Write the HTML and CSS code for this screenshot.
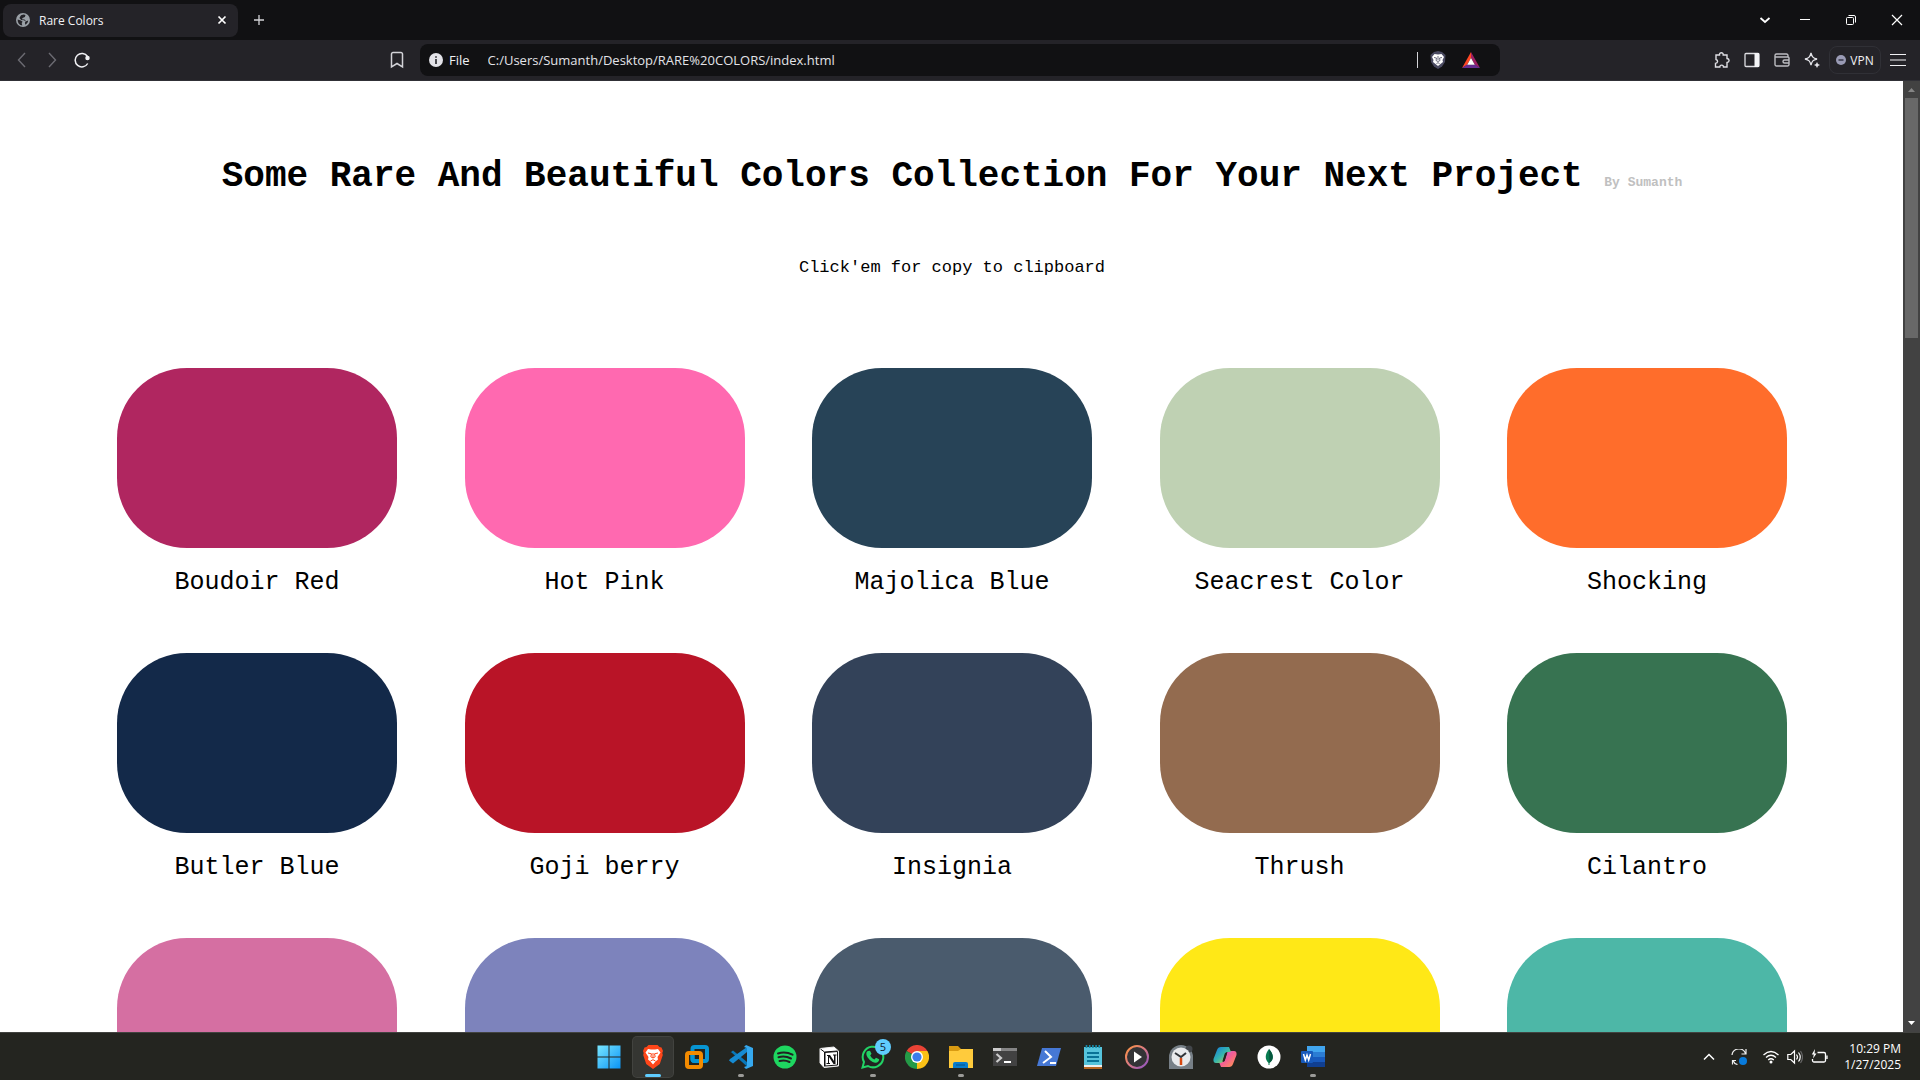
FILE: index.html
```
<!DOCTYPE html>
<html lang="en">
<head>
<meta charset="utf-8">
<title>Rare Colors</title>
<link rel="stylesheet" href="styles.css">
</head>
<body>
<header class="browser">
  <div class="tabs">
    <div class="tab">
      <svg width="14" height="14" viewBox="0 0 14 14"><circle cx="7" cy="7" r="7" fill="#9aa0a6"/><path d="M1.6 6.5 5 7.6l1.6 1.2-.9 1.2.6 2.6C3.300 12.200 1.500 10 1.600 6.500ZM5 2.200l2.600-.7L9.500 2l-.6 2-2.300 1-.7 1.300 2.600.2 1.600 1.700 2.100-.6c-.3 2-1.400 3.400-2.900 4.200l-.4-2.400 1-1-2-1.200-2.700-.2L3.400 5Z" fill="#242328"/></svg>
      <span class="tab-title">Rare Colors</span>
      <button class="icon-button tab-close" aria-label="Close tab"><svg width="10" height="10" viewBox="0 0 10 10" stroke="#fff" stroke-width="1.700"><path d="m1.500 1.500 7 7m0-7-7 7"/></svg></button>
    </div>
    <button class="icon-button new-tab" aria-label="New tab"><svg width="12" height="12" viewBox="0 0 12 12" stroke="#d4d4d8" stroke-width="1.300"><path d="M6 1v10M1 6h10"/></svg></button>
    <div class="window-controls">
      <button class="icon-button" aria-label="Search tabs"><svg width="12" height="12" viewBox="0 0 12 12" fill="none" stroke="#fff" stroke-width="1.800"><path d="m1.500 4 4.500 4 4.500-4"/></svg></button>
      <button class="icon-button" aria-label="Minimize"><svg width="12" height="12" viewBox="0 0 12 12" stroke="#fff"><path d="M1 5.500h10"/></svg></button>
      <button class="icon-button" aria-label="Restore"><svg width="12" height="12" viewBox="0 0 12 12" fill="none" stroke="#fff"><rect x="1.500" y="3.500" width="7" height="7" rx="1"/><path d="M3.500 1.500H9A1.500 1.500 0 0 1 10.500 3v5.500"/></svg></button>
      <button class="icon-button" aria-label="Close"><svg width="12" height="12" viewBox="0 0 12 12" stroke="#fff" stroke-width="1.200"><path d="m1 1 10 10m0-10L1 11"/></svg></button>
    </div>
  </div>
  <div class="toolbar">
    <div class="navigation">
      <button class="icon-button" aria-label="Back"><svg width="16" height="16" viewBox="0 0 16 16" fill="none" stroke="#6c6b72" stroke-width="1.400"><path d="M11 1 4.500 8l6.500 7"/></svg></button>
      <button class="icon-button" aria-label="Forward"><svg width="16" height="16" viewBox="0 0 16 16" fill="none" stroke="#6c6b72" stroke-width="1.400"><path d="m5 1 6.500 7L5 15"/></svg></button>
      <button class="icon-button" aria-label="Reload"><svg width="16" height="16" viewBox="0 0 16 16" fill="none" stroke="#f1f1f4" stroke-width="1.500"><path d="M13.500 4.500A6.700 6.700 0 1 0 13.700 11.500"/><circle cx="13.500" cy="6" r="1.500" fill="#f1f1f4"/></svg></button>
    </div>
    <button class="icon-button bookmark" aria-label="Bookmark"><svg width="14" height="18" viewBox="0 0 14 18" fill="none" stroke="#d2d2d7" stroke-width="1.500"><path d="M1.500 16V3a1.500 1.500 0 0 1 1.500-1.500h8A1.500 1.500 0 0 1 12.500 3v13L7 12.500Z"/></svg></button>
    <form class="address">
      <svg width="14" height="14" viewBox="0 0 14 14"><circle cx="7" cy="7" r="7" fill="#e3e3e8"/><path d="M6.200 3.200h1.600v1.500H6.200zM6.200 6h1.600v5H6.200z" fill="#242328"/></svg>
      <label for="url">File</label>
      <input id="url" type="text" value="C:/Users/Sumanth/Desktop/RARE%20COLORS/index.html">
      <span class="divider"></span>
      <button type="button" class="icon-button" aria-label="Shields"><svg width="16" height="18" viewBox="0 0 16 18"><path d="M4 1 8 0l4 1 3.500 3-.5 7-3 4.500L8 18l-4-2.500L1 11 .5 4Z" fill="#4a4a61"/><path d="m4.500 3 3.500.500 3.500-.500L14 6l-1.500 3 .5 2-2.500 2L8 15l-2.500-2L3 11l.5-2L2 6Z" fill="#fff"/><path d="m4 6.500 2.500.5L6 9.500l2 1 2-1L9.500 7l2.500-.5M8 5v4m-1.500 3.500L8 11.700l1.500.8" fill="none" stroke="#4a4a61" stroke-width=".8"/></svg></button>
      <button type="button" class="icon-button" aria-label="Rewards"><svg width="18" height="16" viewBox="0 0 18 16"><path d="M9 0 0 16l5-3L9 6Z" fill="#ff4724"/><path d="m9 0 9 16-5-3L9 6Z" fill="#9e1f63"/><path d="m0 16 5-3.500h8l5 3.500Z" fill="#662d91"/><path d="m9 6 3.800 6.700H5.200Z" fill="#fff"/></svg></button>
    </form>
    <div class="extensions">
      <button class="icon-button" aria-label="Extensions"><svg width="16" height="16" viewBox="0 0 16 16" fill="none" stroke="#dedee3" stroke-width="1.400"><path d="M2 3h3.500c-.3-3 4-3 3.700 0H13v3.500c2.800.3 2.800 3.500 0 4V15H9.500c0-2.500-3.700-2.500-3.700 0H1.500v-3.600c2.700-.2 2.700-3.400.5-3.900Z"/></svg></button>
      <button class="icon-button" aria-label="Sidebar"><svg width="16" height="16" viewBox="0 0 16 16"><rect x="1" y="1.500" width="14" height="13" rx="1" fill="none" stroke="#dedee3" stroke-width="1.300"/><path d="M10.500 1H15v14h-4.500z" fill="#f4f4f7"/></svg></button>
      <button class="icon-button" aria-label="Wallet"><svg width="16" height="16" viewBox="0 0 16 16" fill="none" stroke="#bcbcc1" stroke-width="1.400"><path d="M14 5V3.500A1.500 1.500 0 0 0 12.500 2h-10A1.500 1.500 0 0 0 1 3.500v9A1.500 1.500 0 0 0 2.500 14h11a1.500 1.500 0 0 0 1.500-1.500V6a1 1 0 0 0-1-1H1m14 3h-4.500a1.500 1.500 0 0 0 0 3H15"/></svg></button>
      <button class="icon-button" aria-label="Assistant"><svg width="16" height="16" viewBox="0 0 16 16" fill="none" stroke="#e3e3e8" stroke-width="1.300"><path d="M7 1c1 4 2 5 6 6-4 1-5 2-6 6-1-4-2-5-6-6 4-1 5-2 6-6Z"/><path d="m13 10 1 2 2 1-2 1-1 2-1-2-2-1 2-1Z" fill="#e3e3e8" stroke="none"/></svg></button>
    </div>
    <button class="vpn"><svg width="10" height="10" viewBox="0 0 10 10"><circle cx="5" cy="5" r="5" fill="#9a9bb5"/><path d="M2.500 4.200h5v1.600h-5z" fill="#3a3a4d"/></svg>VPN</button>
    <button class="icon-button menu" aria-label="Menu"><svg width="16" height="14" viewBox="0 0 16 14" stroke="#f1f1f4" stroke-width="1.200"><path d="M0 1.500h16M0 7h16M0 12.500h16"/></svg></button>
  </div>
</header>

<div class="viewport">
  <main class="page">
    <h1 class="title">Some Rare And Beautiful Colors Collection For Your Next Project <span class="author">By Sumanth</span></h1>
    <p class="hint">Click'em for copy to clipboard</p>
    <div class="palette">
      <button class="color"><span class="swatch boudoir-red"></span>Boudoir Red</button>
      <button class="color"><span class="swatch hot-pink"></span>Hot Pink</button>
      <button class="color"><span class="swatch majolica-blue"></span>Majolica Blue</button>
      <button class="color"><span class="swatch seacrest"></span>Seacrest Color</button>
      <button class="color"><span class="swatch shocking"></span>Shocking</button>
      <button class="color"><span class="swatch butler-blue"></span>Butler Blue</button>
      <button class="color"><span class="swatch goji-berry"></span>Goji berry</button>
      <button class="color"><span class="swatch insignia"></span>Insignia</button>
      <button class="color"><span class="swatch thrush"></span>Thrush</button>
      <button class="color"><span class="swatch cilantro"></span>Cilantro</button>
      <button class="color" aria-label="Pink"><span class="swatch orchid"></span></button>
      <button class="color" aria-label="Lavender"><span class="swatch lavender"></span></button>
      <button class="color" aria-label="Slate"><span class="swatch slate"></span></button>
      <button class="color" aria-label="Yellow"><span class="swatch yellow"></span></button>
      <button class="color" aria-label="Turquoise"><span class="swatch turquoise"></span></button>
    </div>
  </main>
  <div class="scrollbar">
    <svg width="17" height="17" viewBox="0 0 17 17"><path d="M5 11h7L8.500 7Z" fill="#858585"/></svg>
    <div class="thumb"></div>
    <svg class="scroll-down" width="17" height="17" viewBox="0 0 17 17"><path d="M5 6h7l-3.500 4Z" fill="#fff"/></svg>
  </div>
</div>

<footer class="taskbar">
  <nav class="apps">
    <button class="app" aria-label="Start"><svg width="24" height="24" viewBox="0 0 24 24"><defs><linearGradient id="win" x2="1" y2="1"><stop stop-color="#79e6ff"/><stop offset="1" stop-color="#0a94f5"/></linearGradient></defs><path d="M.5.500h11v11H.5zm12 0h11v11h-11zM.5 12.500h11v11H.5zm12 0h11v11h-11z" fill="url(#win)"/></svg></button>
    <button class="app active" aria-label="Brave"><svg width="24" height="24" viewBox="0 0 24 24"><path d="M7.500 0h9l2 2 2 .5L22 6l-.7 2 .5 2-3 9L12 24l-6.800-5-3-9 .5-2L2 6l1.500-3.500 2-.5Z" fill="#ff4619"/><path d="m7 4 3 .5h4l3-.5 2.500 3.500-3 4.500.5 2.500-2.500 2L12 19.500l-2.500-3-2.500-2 .5-2.500-3-4.500Z" fill="#fff"/><path d="m7 8 3.500.8-.7 3 2.200 1.200 2.200-1.200-.7-3L17 8M12 8v5m-2.500 3 2.500-1.300 2.500 1.300" fill="none" stroke="#ff4619"/></svg></button>
    <button class="app" aria-label="VMware"><svg width="24" height="24" viewBox="0 0 24 24" fill="none" stroke-width="4"><rect x="7.500" y="2" width="14.500" height="14" rx="2" stroke="#0795d3"/><rect x="2" y="8" width="14" height="14" rx="2" stroke="#f38b00"/><path d="M7.500 10v4a2 2 0 0 0 2 2h4" stroke="#0795d3"/></svg></button>
    <button class="app running" aria-label="Visual Studio Code"><svg width="24" height="24" viewBox="0 0 24 24"><path d="m2 7 16 14.500V17L4 5.500 0 8.500Z" fill="#0877b9"/><path d="m0 15.500 4 3L18 7V2L1 14Z" fill="#168bd2"/><path d="M17 0 24 3v18l-7 3-2-2 3-1V3l-3-1Z" fill="#36a9ef"/></svg></button>
    <button class="app" aria-label="Spotify"><svg width="24" height="24" viewBox="0 0 24 24"><circle cx="12" cy="12" r="11.500" fill="#1ed760"/><path d="M5 8.500c5-1.500 10-1 14.500 1.200M5.500 12.300c4-1.200 8.500-.8 12.500 1.200M6.500 16c3.500-1 7-.6 10 1" fill="none" stroke="#222" stroke-width="2" stroke-linecap="round"/></svg></button>
    <button class="app" aria-label="Notion"><svg width="24" height="24" viewBox="0 0 24 24"><path d="m3 3.500 14-1.500 4.500 4v15L7 22.500 3 18Z" fill="#fff" stroke="#eee"/><path d="m3.500 4 4 3 13-1M7.500 7v14.500" fill="none" stroke="#111"/><path d="M8 7.500 20.500 6.500v13.500L8 21Z" fill="#fff" stroke="#111"/><path d="M10 10h3l4 6v-5.500h-1v-1h3.500v1h-1V19h-2l-4.500-7v6h1v1H9.500v-1H11v-7h-1Z" fill="#111"/></svg></button>
    <button class="app running" aria-label="WhatsApp"><svg width="24" height="24" viewBox="0 0 24 24"><path d="M1.500 22.500 3 17a10.300 10.300 0 1 1 4 4Z" fill="#222" stroke="#22d365" stroke-width="2"/><path d="m7 6 2-.2 1.500 3-1.300 1.800c1 2 2.300 3.100 4.200 3.900l1.600-1.700 3.200 1.500c-.2 3-2.500 4-5 3.200-4-1.200-8.500-6-7.800-9.500.1-.9.700-1.600 1.600-2Z" fill="#22d365"/></svg><span class="badge">5</span></button>
    <button class="app" aria-label="Chrome"><svg width="24" height="24" viewBox="0 0 24 24"><path d="M12 12 1.600 6a12 12 0 0 1 20.800 0Z" fill="#ea4335"/><path d="M12 12 22.400 6A12 12 0 0 1 12 24Z" fill="#fbc116"/><path d="M12 12v12A12 12 0 0 1 1.600 6Z" fill="#249a47"/><path d="M12 6h10.400l-4.900 9L12 24l4-9Z" fill="#fbc116"/><circle cx="12" cy="12" r="6" fill="#fff"/><circle cx="12" cy="12" r="4.600" fill="#3b7ded"/></svg></button>
    <button class="app running" aria-label="File Explorer"><svg width="24" height="24" viewBox="0 0 24 24"><path d="M0 1h9l3 3h11v8H0Z" fill="#d99b12"/><path d="M0 6h9l3-2h12v19H0Z" fill="#ffcb3c"/><path d="M4 23v-4a2 2 0 0 1 2-2h11a2 2 0 0 1 2 2v4Z" fill="#087bcb"/><path d="M7 20h9" stroke="#075f9e" stroke-width="1.500"/></svg></button>
    <button class="app" aria-label="Terminal"><svg width="24" height="24" viewBox="0 0 24 24"><path d="M0 3h24v18H0Z" fill="#424242"/><path d="M0 3h8v3H0z" fill="#ccc"/><path d="M8 3h16v3H8z" fill="#858585"/><path d="m3.500 9 4.500 4-4.500 4" fill="none" stroke="#ccc" stroke-width="2.200"/><path d="M11 16h7v2h-7z" fill="#fff"/></svg></button>
    <button class="app" aria-label="PowerShell"><svg width="24" height="24" viewBox="0 0 24 24"><path d="M5 3h19l-5 18H0Z" fill="#4678d5"/><path d="m8 6 6 6-8 6m7 0h6" fill="none" stroke="#fff" stroke-width="2"/></svg></button>
    <button class="app" aria-label="Notepad"><svg width="24" height="24" viewBox="0 0 24 24"><path d="M3 2h18v19H3z" fill="#56c4dc"/><path d="M3 20h18v2H3z" fill="#eee"/><path d="M3 22h18v2H3z" fill="#b66520"/><path d="M6 8h12M6 12h12M6 16h12" stroke="#087397" stroke-width="1.800"/><path d="M5.500 0v3m3.200-3v3m3.200-3v3m3.200-3v3m3.200-3v3" stroke="#168caa" stroke-width="1.600"/></svg></button>
    <button class="app" aria-label="Media Player"><svg width="24" height="24" viewBox="0 0 24 24"><defs><linearGradient id="media" x2="1" y2="1"><stop stop-color="#ff943f"/><stop offset=".5" stop-color="#d87985"/><stop offset="1" stop-color="#8750c7"/></linearGradient></defs><circle cx="12" cy="12" r="11" fill="#333336" stroke="url(#media)" stroke-width="2"/><path d="M9 6.500v11l8-5.500Z" fill="#fff"/></svg></button>
    <button class="app" aria-label="Clock"><svg width="24" height="24" viewBox="0 0 24 24"><path d="M0 12A12 12 0 0 1 24 12v12H0Z" fill="#778087"/><circle cx="20" cy="4" r="3.500" fill="#42464a"/><circle cx="12" cy="12" r="9.500" fill="#e8eaec"/><path d="m6 8 6 4 5-4" fill="none" stroke="#303438" stroke-width="2"/><path d="M12 13v7" stroke="#d74810" stroke-width="2.500"/></svg></button>
    <button class="app" aria-label="Copilot"><svg width="24" height="24" viewBox="0 0 24 24"><defs><linearGradient id="cool" y2="1"><stop stop-color="#137ae0"/><stop offset=".5" stop-color="#36b7ad"/><stop offset="1" stop-color="#ebd42e"/></linearGradient><linearGradient id="warm" y2="1"><stop stop-color="#ac65ea"/><stop offset=".5" stop-color="#f45f91"/><stop offset="1" stop-color="#ff9d48"/></linearGradient></defs><path d="M16 22H8l-2-5h4q1.500 0 2-2l2.500-8q.5-1 2-1H21q3 0 2.500 4L20 19q-1 3-4 3Z" fill="url(#warm)"/><path d="M8 2h8l2 5h-4q-1.500 0-2 2l-2.500 8q-.5 1-2 1H3q-3 0-2.500-4L4 5q1-3 4-3Z" fill="url(#cool)"/><path d="M12 8h2l-2.500 8h-2Z" fill="#242520"/></svg></button>
    <button class="app" aria-label="MongoDB"><svg width="24" height="24" viewBox="0 0 24 24"><circle cx="12" cy="12" r="11.500" fill="#fff"/><path d="M12 4c5 6 5 10 .5 14v2h-1v-2C7.500 14 8 9 12 4Z" fill="#087b50"/><path d="M12 4c5 6 5 10 .5 14Z" fill="#06583e"/></svg></button>
    <button class="app running" aria-label="Word"><svg width="24" height="24" viewBox="0 0 24 24"><path d="M6 1h18v6H6z" fill="#41a5ee"/><path d="M6 7h18v5H6z" fill="#2b7cd3"/><path d="M6 12h18v5H6z" fill="#185abd"/><path d="M6 17h18v5H6z" fill="#103f91"/><rect y="6" width="12" height="12" rx="1" fill="#175abc"/><path d="m2.500 9 1.800 6L6 10l1.700 5 1.800-6" fill="none" stroke="#fff" stroke-width="1.500"/></svg></button>
  </nav>
  <div class="tray">
    <button class="icon-button" aria-label="Show hidden icons"><svg width="12" height="12" viewBox="0 0 12 12" fill="none" stroke="#fff" stroke-width="1.500"><path d="m1 8.500 5-5 5 5"/></svg></button>
    <button class="icon-button sync" aria-label="Updates"><svg width="16" height="16" viewBox="0 0 16 16" fill="none" stroke="#eee" stroke-width="1.200"><path d="M1 6A7 7 0 0 1 14.500 4.500M15 0v5h-4.500M6.500 15.500a6 6 0 0 1-4.500-4M1.500 15.500v-4H5"/><circle cx="12" cy="12" r="4" fill="#087bdc" stroke="none"/></svg></button>
    <button class="status" aria-label="Network, volume and battery">
      <svg width="16" height="16" viewBox="0 0 16 16" fill="none" stroke="#fff" stroke-width="1.300"><path d="M.5 6q7.500-7 15 0M3 8.500q5-4.500 10 0M5.200 11q2.800-2.500 5.600 0"/><circle cx="8" cy="13" r="1.500" fill="#fff" stroke="none"/></svg>
      <svg width="16" height="16" viewBox="0 0 16 16" fill="none" stroke="#fff" stroke-width="1.200"><path d="M.8 5.500h3L7.500 2v12L3.800 10.500h-3ZM9.500 5.500q2 2.500 0 5M11.500 3.500q3.500 4.500 0 9"/><path d="M13.500 2q4 6 0 12" stroke="#666"/></svg>
      <svg width="17" height="16" viewBox="0 0 17 16" fill="none" stroke="#fff" stroke-width="1.300"><path d="M6.500 3.500H13a1.500 1.500 0 0 1 1.500 1.500v6.500A1.500 1.500 0 0 1 13 13H3a1.500 1.500 0 0 1-1.500-1.500V10M16 6.500v3.500"/><path d="M4 0 .8 5.500h2L2 9.500l3.500-5h-2Z" fill="#fff" stroke="none"/></svg>
    </button>
    <time class="clock">10:29 PM<br>1/27/2025</time>
  </div>
</footer>
</body>
</html>
```
FILE: styles.css
```
* { box-sizing: border-box; }
body {
  margin: 0;
  height: 100vh;
  display: flex;
  flex-direction: column;
  overflow: hidden;
  background: #fff;
  color: #000;
  font-family: "Open Sans", "Noto Sans", sans-serif;
}
button { border: 0; padding: 0; background: none; color: inherit; font: inherit; cursor: pointer; }
svg { display: block; flex: none; }
.icon-button { display: flex; align-items: center; justify-content: center; flex: none; }

.browser { flex: none; background: #242328; color: #f1f1f4; }
.tabs { height: 40px; display: flex; align-items: center; padding-left: 3px; background: #111113; }
.tab { width: 235px; height: 33px; display: flex; align-items: center; gap: 9px; padding: 0 11px 0 13px; border-radius: 8px; background: #242328; font-size: 12px; }
.tab-close { margin-left: auto; }
.new-tab { margin-left: 15px; }
.window-controls { margin-left: auto; display: flex; }
.window-controls .icon-button { width: 46px; height: 40px; }
.window-controls .icon-button:first-child { width: 34px; }

.toolbar { height: 41px; display: flex; align-items: center; border-bottom: 1px solid #303036; }
.navigation { display: flex; gap: 14px; padding-left: 14px; }
.bookmark { margin-left: 300px; margin-right: 16px; }
.address { flex: 0 1 1080px; height: 32px; display: flex; align-items: center; padding: 0 20px 0 9px; border-radius: 8px; background: #111113; font-size: 13px; }
.address label { margin: 0 18px 0 6px; }
.address input { flex: 1; min-width: 0; padding: 0; border: 0; outline: 0; background: none; color: #e3e3e8; font: inherit; }
.divider { width: 1px; height: 16px; margin-right: 12px; background: #d4d4d8; }
.address .icon-button + .icon-button { margin-left: 16px; }
.extensions { display: flex; gap: 14px; margin-left: auto; }
.vpn { width: 52px; height: 28px; display: flex; align-items: center; justify-content: center; gap: 4px; margin: 0 9px; border: 1px solid #303036; border-radius: 8px; font-size: 12px; }
.menu { margin-right: 14px; }

.viewport { flex: 1; min-height: 0; display: flex; }
.page { flex: 1; overflow: hidden; padding: 70px 116px 0 117px; font-family: "Liberation Mono", monospace; text-align: center; }
.title { margin: 0; font-size: 36px; line-height: 52px; white-space: nowrap; }
.author { color: #c0c0c0; font-size: 13px; }
.hint { margin: 47px 0 88px; font-size: 17px; line-height: 24px; }
.palette { display: grid; grid-template-columns: repeat(5, 280px); justify-content: space-between; row-gap: 55px; }
.color { height: 230px; display: flex; flex-direction: column; align-items: stretch; gap: 20px; font-size: 25px; line-height: 30px; }
.swatch { height: 180px; border-radius: 70px; }
.boudoir-red { background: #b02660; }
.hot-pink { background: #ff69b0; }
.majolica-blue { background: #274357; }
.seacrest { background: #bfd1b3; }
.shocking { background: #ff6d2b; }
.butler-blue { background: #132949; }
.goji-berry { background: #b91427; }
.insignia { background: #334259; }
.thrush { background: #936b4f; }
.cilantro { background: #377351; }
.orchid { background: #d56fa2; }
.lavender { background: #7d83bc; }
.slate { background: #4a5b6d; }
.yellow { background: #ffe817; }
.turquoise { background: #4db7a7; }

.scrollbar { width: 17px; flex: none; display: flex; flex-direction: column; background: #424242; }
.thumb { width: 13px; height: 240px; margin: 0 auto; background: #686868; }
.scroll-down { margin-top: auto; }

.taskbar { height: 48px; flex: none; display: grid; grid-template-columns: 1fr auto 1fr; align-items: center; border-top: 1px solid #424340; background: #242520; color: #fff; }
.apps { grid-column: 2; display: flex; gap: 4px; padding-left: 2px; }
.app { position: relative; width: 40px; height: 40px; display: flex; align-items: center; justify-content: center; border-radius: 4px; }
.active { background: #353632; box-shadow: 0 0 0 1px #42433f; }
.active::after, .running::after { content: ""; position: absolute; bottom: 0; left: 17px; width: 6px; height: 3px; border-radius: 2px; background: #9b9b98; }
.active::after { left: 12px; width: 16px; background: #60cdff; }
.badge { position: absolute; top: 2px; right: 2px; width: 16px; height: 16px; border-radius: 8px; background: #60cdff; color: #123; font-size: 11px; line-height: 16px; }
.tray { justify-self: end; display: flex; align-items: center; padding-right: 19px; }
.sync { margin: 0 16px; }
.status { display: flex; gap: 8px; margin-right: 16px; }
.clock { text-align: right; font-size: 12px; line-height: 16px; }
```
